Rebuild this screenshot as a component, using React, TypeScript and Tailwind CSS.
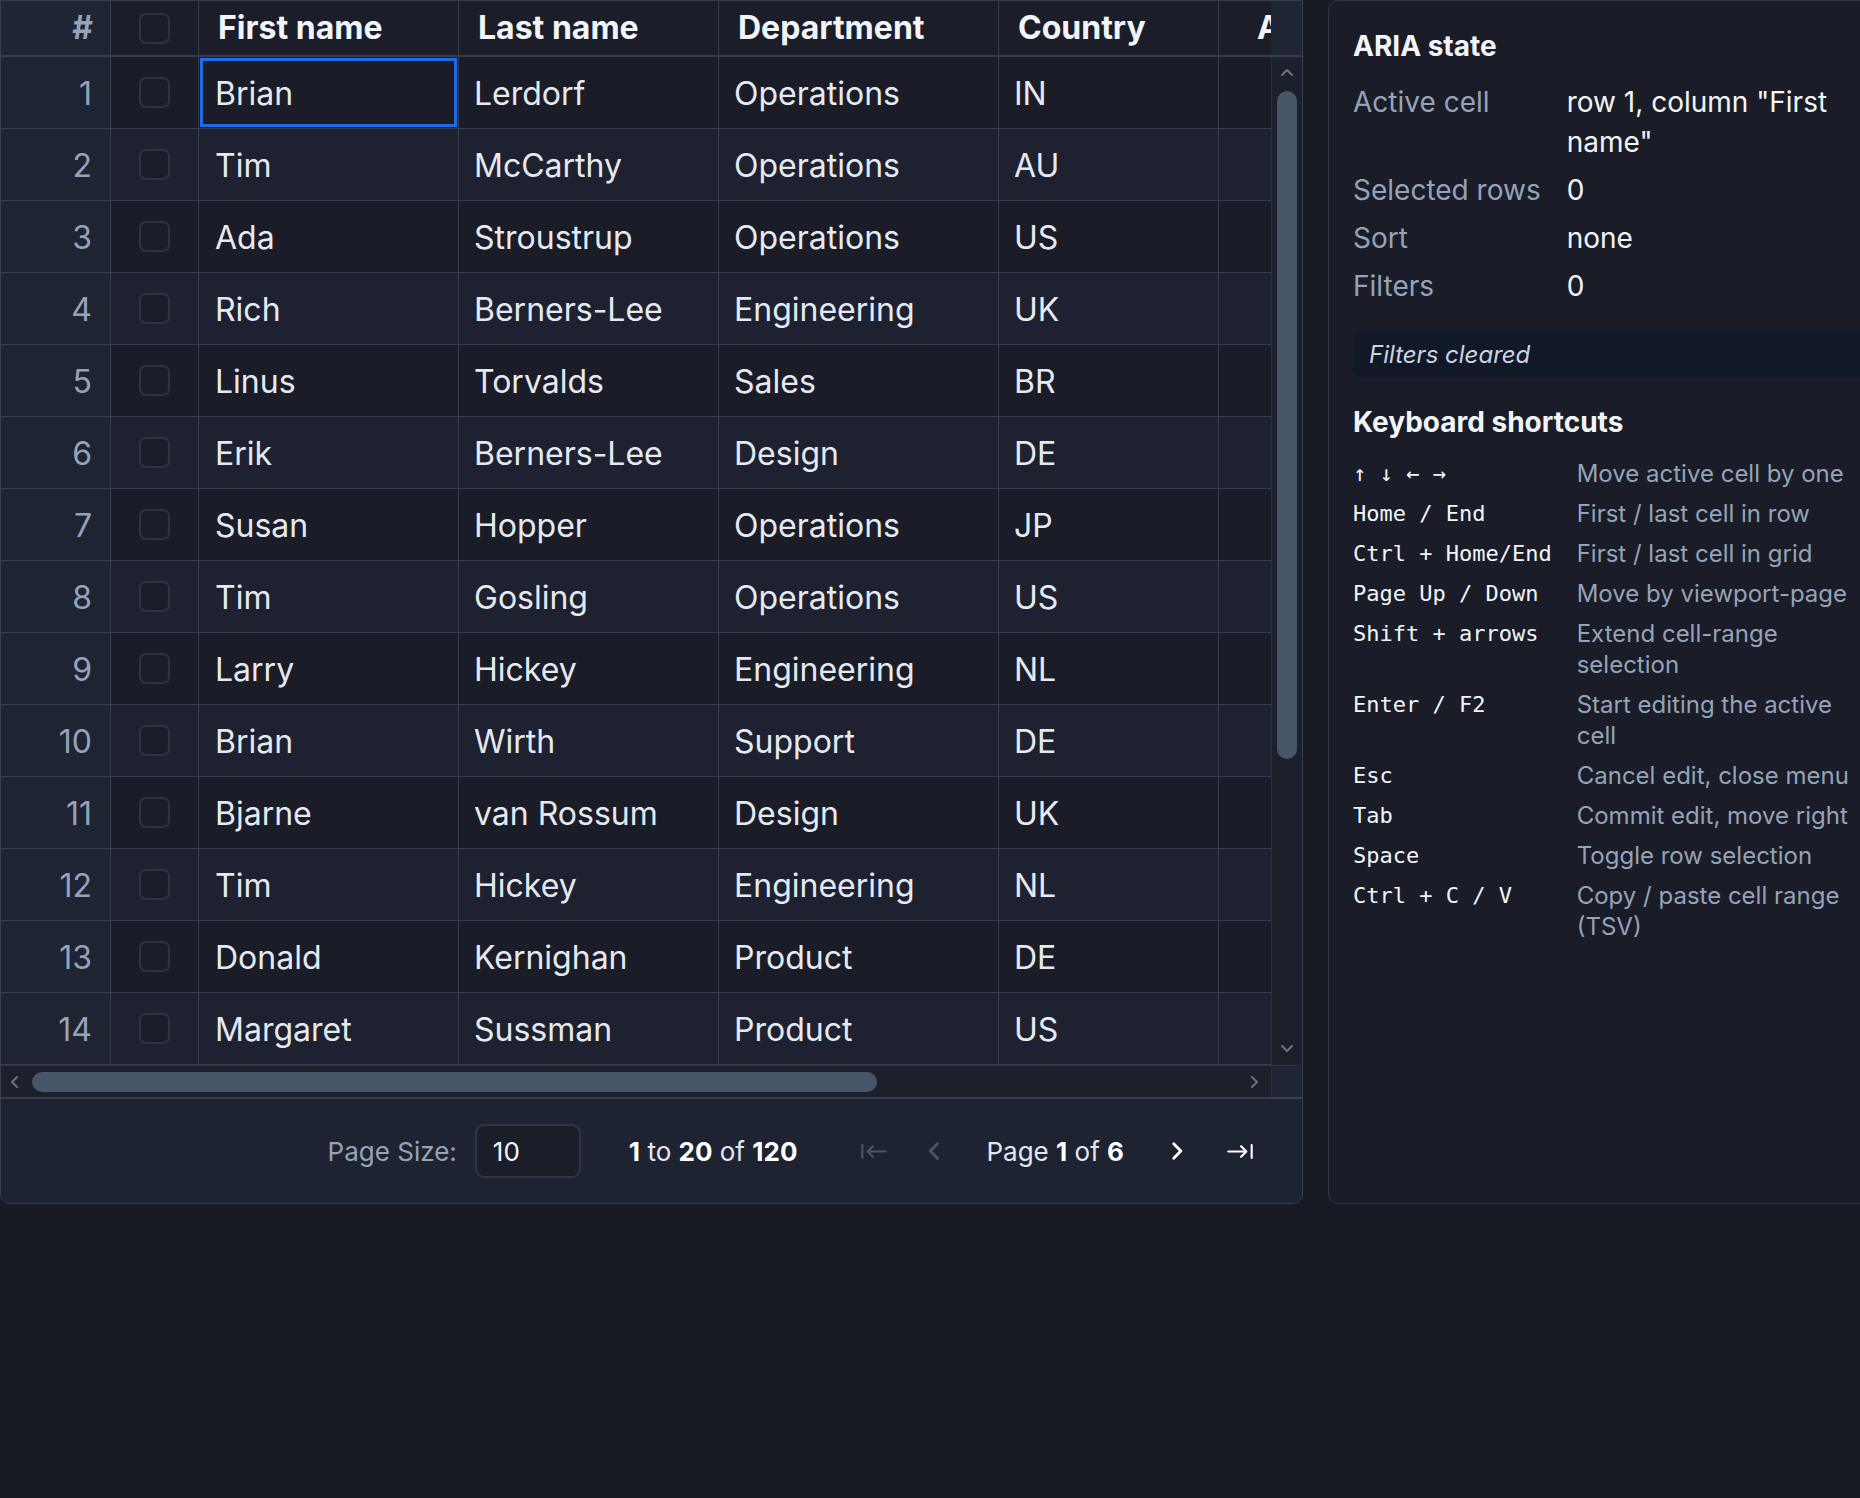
import React from 'react';

type Row = { id: number; first: string; last: string; dept: string; country: string; age: number };

const rows: Row[] = [
  { id: 1, first: 'Brian', last: 'Lerdorf', dept: 'Operations', country: 'IN', age: 41 },
  { id: 2, first: 'Tim', last: 'McCarthy', dept: 'Operations', country: 'AU', age: 35 },
  { id: 3, first: 'Ada', last: 'Stroustrup', dept: 'Operations', country: 'US', age: 29 },
  { id: 4, first: 'Rich', last: 'Berners-Lee', dept: 'Engineering', country: 'UK', age: 52 },
  { id: 5, first: 'Linus', last: 'Torvalds', dept: 'Sales', country: 'BR', age: 44 },
  { id: 6, first: 'Erik', last: 'Berners-Lee', dept: 'Design', country: 'DE', age: 38 },
  { id: 7, first: 'Susan', last: 'Hopper', dept: 'Operations', country: 'JP', age: 31 },
  { id: 8, first: 'Tim', last: 'Gosling', dept: 'Operations', country: 'US', age: 47 },
  { id: 9, first: 'Larry', last: 'Hickey', dept: 'Engineering', country: 'NL', age: 26 },
  { id: 10, first: 'Brian', last: 'Wirth', dept: 'Support', country: 'DE', age: 55 },
  { id: 11, first: 'Bjarne', last: 'van Rossum', dept: 'Design', country: 'UK', age: 33 },
  { id: 12, first: 'Tim', last: 'Hickey', dept: 'Engineering', country: 'NL', age: 40 },
  { id: 13, first: 'Donald', last: 'Kernighan', dept: 'Product', country: 'DE', age: 49 },
  { id: 14, first: 'Margaret', last: 'Sussman', dept: 'Product', country: 'US', age: 36 },
];

const shortcuts: [string, string][] = [
  ['↑ ↓ ← →', 'Move active cell by one'],
  ['Home / End', 'First / last cell in row'],
  ['Ctrl + Home/End', 'First / last cell in grid'],
  ['Page Up / Down', 'Move by viewport-page'],
  ['Shift + arrows', 'Extend cell-range selection'],
  ['Enter / F2', 'Start editing the active cell'],
  ['Esc', 'Cancel edit, close menu'],
  ['Tab', 'Commit edit, move right'],
  ['Space', 'Toggle row selection'],
  ['Ctrl + C / V', 'Copy / paste cell range (TSV)'],
];

const Checkbox = () => (
  <span className="block w-[31px] h-[31px] rounded-[7px] border-2 border-[#2c3343] bg-[#1a1e29]" />
);

const Chevron = ({ dir, className }: { dir: 'up' | 'down' | 'left' | 'right'; className?: string }) => {
  const d = {
    up: 'M2 8 L7 3 L12 8',
    down: 'M2 3 L7 8 L12 3',
    left: 'M8 2 L3 7 L8 12',
    right: 'M4 2 L9 7 L4 12',
  }[dir];
  return (
    <svg viewBox="0 0 14 14" className={className} fill="none" stroke="currentColor" strokeWidth={2} strokeLinecap="round" strokeLinejoin="round">
      <path d={d} />
    </svg>
  );
};

const DataGrid = () => (
  <div className="w-[1303px] shrink-0 flex flex-col border border-[#363e4d] rounded-b-[10px] bg-[#1a1d27] overflow-hidden">
    <div className="flex">
      {/* viewport */}
      <div className="w-[1270px] overflow-hidden">
        <div className="w-[1400px]">
          {/* header */}
          <div className="flex h-[56px] border-b-2 border-[#363e4d] bg-[#1b1e29] text-[32px] font-bold text-[#f1f5f9]">
            <div className="w-[110px] shrink-0 flex items-center justify-end pr-[17px] border-r border-[#363e4d] bg-[#1f2533] text-[#94a3b8]">#</div>
            <div className="w-[88px] shrink-0 flex items-center justify-center border-r border-[#363e4d]"><Checkbox /></div>
            <div className="w-[260px] shrink-0 flex items-center pl-[19px] border-r border-[#363e4d]">First name</div>
            <div className="w-[260px] shrink-0 flex items-center pl-[19px] border-r border-[#363e4d]">Last name</div>
            <div className="w-[280px] shrink-0 flex items-center pl-[19px] border-r border-[#363e4d]">Department</div>
            <div className="w-[220px] shrink-0 flex items-center pl-[19px] border-r border-[#363e4d]">Country</div>
            <div className="w-[160px] shrink-0 flex items-center pl-[38px] border-r border-[#363e4d]">Age</div>
          </div>
          {/* body */}
          {rows.map((r, i) => (
            <div key={r.id} className={`flex h-[72px] border-b border-[#363e4d] text-[32px] text-[#e5e9f0] ${i % 2 === 1 ? 'bg-[#1e2230]' : 'bg-[#1a1d27]'}`}>
              <div className="w-[110px] shrink-0 flex items-center justify-end pr-[18px] pt-[3px] border-r border-[#363e4d] bg-[#1e2432] text-[#94a3b8]">{r.id}</div>
              <div className="w-[88px] shrink-0 flex items-center justify-center border-r border-[#363e4d]"><Checkbox /></div>
              <div className="w-[260px] shrink-0 border-r border-[#363e4d] p-px">
                <div className={`h-full flex items-center pl-[12px] pt-[3px] border-[3px] ${r.id === 1 ? 'border-[#1d6ce8]' : 'border-transparent'}`}>{r.first}</div>
              </div>
              <div className="w-[260px] shrink-0 flex items-center pl-[15px] pt-[3px] border-r border-[#363e4d]">{r.last}</div>
              <div className="w-[280px] shrink-0 flex items-center pl-[15px] pt-[3px] border-r border-[#363e4d]">{r.dept}</div>
              <div className="w-[220px] shrink-0 flex items-center pl-[15px] pt-[3px] border-r border-[#363e4d]">{r.country}</div>
              <div className="w-[160px] shrink-0 flex items-center justify-end pr-[16px] border-r border-[#363e4d]">{r.age}</div>
            </div>
          ))}
        </div>
      </div>
      {/* vertical scrollbar */}
      <div className="w-[31px] shrink-0 flex flex-col">
        <div className="h-[56px] bg-[#1f2533] border-b-2 border-[#363e4d]" />
        <div className="flex-1 flex flex-col items-center bg-[#1c202b] border-l border-[#2a303d]">
          <Chevron dir="up" className="w-[14px] h-[14px] mt-[10px] text-[#64748b]" />
          <div className="w-[20px] h-[668px] mt-[10px] rounded-full bg-[#475569]" />
          <div className="flex-1" />
          <Chevron dir="down" className="w-[14px] h-[14px] mb-[8px] text-[#64748b]" />
        </div>
      </div>
    </div>
    {/* horizontal scrollbar */}
    <div className="flex h-[32px] border-t border-[#2a303d]">
      <div className="w-[1270px] flex items-center bg-[#1c202b]">
        <Chevron dir="left" className="w-[14px] h-[14px] ml-[8px] text-[#64748b]" />
        <div className="w-[845px] h-[20px] ml-[9px] rounded-full bg-[#475569]" />
        <div className="flex-1" />
        <Chevron dir="right" className="w-[14px] h-[14px] mr-[9px] text-[#64748b]" />
      </div>
      <div className="w-[31px] bg-[#1f2533] border-l border-[#2a303d]" />
    </div>
    {/* pagination */}
    <div className="h-[106px] flex items-center justify-end pr-[48px] border-t-2 border-[#363e4d] bg-[#1e2331] text-[26px] text-[#e2e8f0]">
      <span className="text-[#94a3b8]">Page Size:</span>
      <div className="ml-[18px] w-[106px] h-[54px] flex items-center pl-[16px] rounded-[9px] border-2 border-[#2e3545] bg-[#1a1e29] text-[#f1f5f9]">10</div>
      <span className="ml-[48px]">
        <b className="font-bold text-white">1</b> to <b className="font-bold text-white">20</b> of <b className="font-bold text-white">120</b>
      </span>
      <svg viewBox="0 0 26 16" className="ml-[63px] w-[28px] h-[17px] text-[#4b5563]" fill="none" stroke="currentColor" strokeWidth={2} strokeLinecap="round" strokeLinejoin="round">
        <path d="M2 2 V14 M24 8 H7 M12 3 L7 8 L12 13" />
      </svg>
      <Chevron dir="left" className="ml-[38px] w-[20px] h-[20px] text-[#4b5563]" />
      <span className="ml-[40px]">
        Page <b className="font-bold text-white">1</b> of <b className="font-bold text-white">6</b>
      </span>
      <Chevron dir="right" className="ml-[44px] w-[20px] h-[20px] text-white" />
      <svg viewBox="0 0 26 16" className="ml-[38px] w-[28px] h-[17px] text-white" fill="none" stroke="currentColor" strokeWidth={2} strokeLinecap="round" strokeLinejoin="round">
        <path d="M24 2 V14 M2 8 H19 M14 3 L19 8 L14 13" />
      </svg>
    </div>
  </div>
);

const SidePanel = () => (
  <div className="w-[561px] shrink-0 h-[1204px] border border-[#2f3747] rounded-[10px] bg-[#1a1d27] px-[24px] pt-[29px]">
    <h2 className="text-[28px] leading-[32px] font-bold text-[#f1f5f9]">ARIA state</h2>
    <dl className="mt-[20px] grid grid-cols-[auto_1fr] gap-x-[26px] gap-y-[8px] text-[28px] leading-[40px]">
      <dt className="text-[#94a3b8]">Active cell</dt>
      <dd className="text-[#f1f5f9]">row 1, column "First name"</dd>
      <dt className="text-[#94a3b8]">Selected rows</dt>
      <dd className="text-[#f1f5f9]">0</dd>
      <dt className="text-[#94a3b8]">Sort</dt>
      <dd className="text-[#f1f5f9]">none</dd>
      <dt className="text-[#94a3b8]">Filters</dt>
      <dd className="text-[#f1f5f9]">0</dd>
    </dl>
    <div className="mt-[26px] h-[45px] flex items-center pl-[16px] rounded-[8px] bg-[#111827] text-[24px] italic text-[#cbd5e1]">Filters cleared</div>
    <h2 className="mt-[29px] text-[28px] leading-[32px] font-bold text-[#f1f5f9]">Keyboard shortcuts</h2>
    <div className="mt-[20px] grid grid-cols-[auto_1fr] gap-x-[25px] gap-y-[9px] text-[24px] leading-[31px]">
      {shortcuts.map(([k, d]) => (
        <React.Fragment key={k}>
          <kbd className="font-['DejaVu_Sans_Mono',monospace] text-[22px] text-[#f1f5f9] whitespace-pre">{k}</kbd>
          <span className="text-[#94a3b8]">{d}</span>
        </React.Fragment>
      ))}
    </div>
  </div>
);

export default function App() {
  return (
    <div className="w-[1860px] h-[1498px] overflow-hidden bg-[#181b24] font-['Inter',sans-serif]">
      <div className="flex items-start gap-[25px]">
        <DataGrid />
        <SidePanel />
      </div>
    </div>
  );
}
